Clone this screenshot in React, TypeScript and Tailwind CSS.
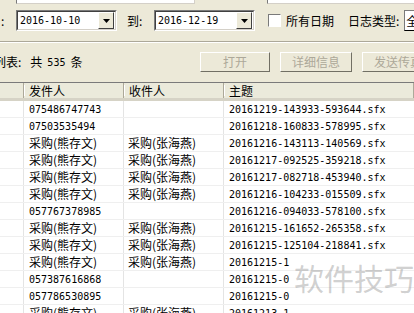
import React from "react";

const CJK = "font-['SimSun','Noto_Sans_CJK_SC',sans-serif]";
const MONO = "font-['DejaVu_Sans_Mono','Noto_Sans_CJK_SC',monospace]";

type Row = { from: string; to: string; subject: string };

const A = "采购(熊存文)";
const B = "采购(张海燕)";

const rows: Row[] = [
  { from: "075486747743", to: "", subject: "20161219-143933-593644.sfx" },
  { from: "07503535494", to: "", subject: "20161218-160833-578995.sfx" },
  { from: A, to: B, subject: "20161216-143113-140569.sfx" },
  { from: A, to: B, subject: "20161217-092525-359218.sfx" },
  { from: A, to: B, subject: "20161217-082718-453940.sfx" },
  { from: A, to: B, subject: "20161216-104233-015509.sfx" },
  { from: "057767378985", to: "", subject: "20161216-094033-578100.sfx" },
  { from: A, to: B, subject: "20161215-161652-265358.sfx" },
  { from: A, to: B, subject: "20161215-125104-218841.sfx" },
  { from: A, to: B, subject: "20161215-1" },
  { from: "057387616868", to: "", subject: "20161215-0" },
  { from: "057786530895", to: "", subject: "20161215-0" },
  { from: A, to: B, subject: "20161213-1" },
];

function isNum(s: string) {
  return /^[0-9\-.a-z]+$/.test(s);
}

function Txt({ s }: { s: string }) {
  if (isNum(s)) {
    return <span className={`${MONO} text-[10px] tracking-[0px]`}>{s}</span>;
  }
  return <span className={`${CJK} text-[12px]`}>{s}</span>;
}

function DateBox({ value }: { value: string }) {
  return (
    <div className="w-[101px] h-[21px] shrink-0 border border-t-[#7a7a7a] border-l-[#7a7a7a] border-r-white border-b-white flex">
      <div className="flex-1 bg-white border border-t-[#404040] border-l-[#404040] border-r-[#d4d0c8] border-b-[#d4d0c8] flex items-center pr-[1px]">
        <span className={`${MONO} text-[10px] pl-[2px] flex-1 text-black`}>{value}</span>
        <div className="w-[16px] h-[17px] bg-[#ece9d8] border border-t-white border-l-white border-r-[#404040] border-b-[#404040] flex items-center justify-center">
          <svg width="7" height="4" viewBox="0 0 7 4">
            <polygon points="0,0 7,0 3.5,4" fill="#000" />
          </svg>
        </div>
      </div>
    </div>
  );
}

function Btn({ label, w }: { label: string; w: string }) {
  return (
    <div
      className={`${w} h-[20px] shrink-0 border border-t-white border-l-white border-r-[#716f64] border-b-[#716f64] bg-[#ece9d8] flex items-center justify-center`}
    >
      <span className={`${CJK} text-[12px] text-[#aca899]`}>{label}</span>
    </div>
  );
}

export default function App() {
  return (
    <div className="w-[414px] h-[313px] overflow-hidden bg-[#ece9d8] relative text-black">
      {/* top strip */}
      <div className="h-[10px] flex items-start">
        <div className="ml-[16px] w-[179px] h-[4px] bg-white border-b border-r border-b-[#d4d0c8] border-r-[#d4d0c8] border-l border-l-[#7a7a7a]" />
        <div className="ml-[72px] flex-1 h-[4px] bg-white border-b border-b-[#d4d0c8] border-l border-l-[#7a7a7a]" />
      </div>
      {/* date row */}
      <div className="h-[21px] flex items-center whitespace-nowrap overflow-hidden">
        <span className={`${CJK} text-[12px] w-[16px] shrink-0 pl-[1px]`}>:</span>
        <DateBox value="2016-10-10" />
        <span className={`${CJK} text-[12px] ml-[10px] w-[27px] shrink-0`}>到:</span>
        <DateBox value="2016-12-19" />
        <div className="ml-[13px] w-[13px] h-[13px] shrink-0 bg-white border border-t-[#7a7a7a] border-l-[#7a7a7a] border-r-white border-b-white" />
        <span className={`${CJK} text-[12px] ml-[5px] shrink-0`}>所有日期</span>
        <span className={`${CJK} text-[12px] ml-[14px] shrink-0`}>日志类型:</span>
        <div className="ml-[5px] w-[60px] shrink-0 h-[21px] bg-white border border-t-[#7a7a7a] border-l-[#7a7a7a] flex items-center overflow-hidden">
          <span className={`${CJK} text-[12px] pl-[1px]`}>全部</span>
        </div>
      </div>
      {/* separator */}
      <div className="mt-[10px] h-[1px] bg-[#aca899]" />
      <div className="h-[1px] bg-white" />
      {/* label + buttons */}
      <div className="h-[39px] flex items-center whitespace-nowrap pb-[1px] overflow-hidden">
        <div className="w-[206px] shrink-0 flex items-center -ml-[6px]">
          <span className={`${CJK} text-[12px]`}>列表:</span>
          <span className={`${CJK} text-[12px] ml-[9px]`}>共</span>
          <span className={`${MONO} text-[10px] ml-[5px]`}>535</span>
          <span className={`${CJK} text-[12px] ml-[5px]`}>条</span>
        </div>
        <Btn label="打开" w="w-[70px]" />
        <Btn label="详细信息" w="w-[72px] ml-[10px]" />
        <Btn label="发送传真" w="w-[72px] ml-[10px]" />
      </div>
      {/* table */}
      <div className="border-t border-t-[#7a7a7a] bg-white">
        <div className="h-[18px] flex bg-[#ebeadb] border-b-[3px] border-b-[#d6d3c6]">
          {[
            { w: "w-[24px]", t: "" },
            { w: "w-[100px]", t: "发件人" },
            { w: "w-[100px]", t: "收件人" },
            { w: "flex-1", t: "主题" },
          ].map((c, i) => (
            <div key={i} className={`${c.w} h-full flex items-center pl-[5px] border-r border-r-[#aca899] relative`}>
              <span className={`${CJK} text-[12px]`}>{c.t}</span>
              <div className="absolute right-[-2px] top-[2px] bottom-[2px] w-[1px] bg-white" />
            </div>
          ))}
        </div>
        {rows.map((r, i) => (
          <div key={i} className="h-[17px] flex border-b border-b-[#efefef] whitespace-nowrap">
            <div className="w-[24px] border-r border-r-[#e4e4e4]" />
            <div className="w-[100px] border-r border-r-[#e4e4e4] flex items-center pl-[5px]">
              <Txt s={r.from} />
            </div>
            <div className="w-[100px] border-r border-r-[#e4e4e4] flex items-center pl-[4px]">
              <Txt s={r.to} />
            </div>
            <div className="flex-1 flex items-center pl-[5px]">
              <Txt s={r.subject} />
            </div>
          </div>
        ))}
      </div>
      {/* watermark */}
      <div className={`absolute left-[294px] top-[262px] text-[30px] leading-none whitespace-nowrap text-[rgba(150,150,150,0.45)] ${CJK}`}>
        软件技巧
      </div>
    </div>
  );
}
